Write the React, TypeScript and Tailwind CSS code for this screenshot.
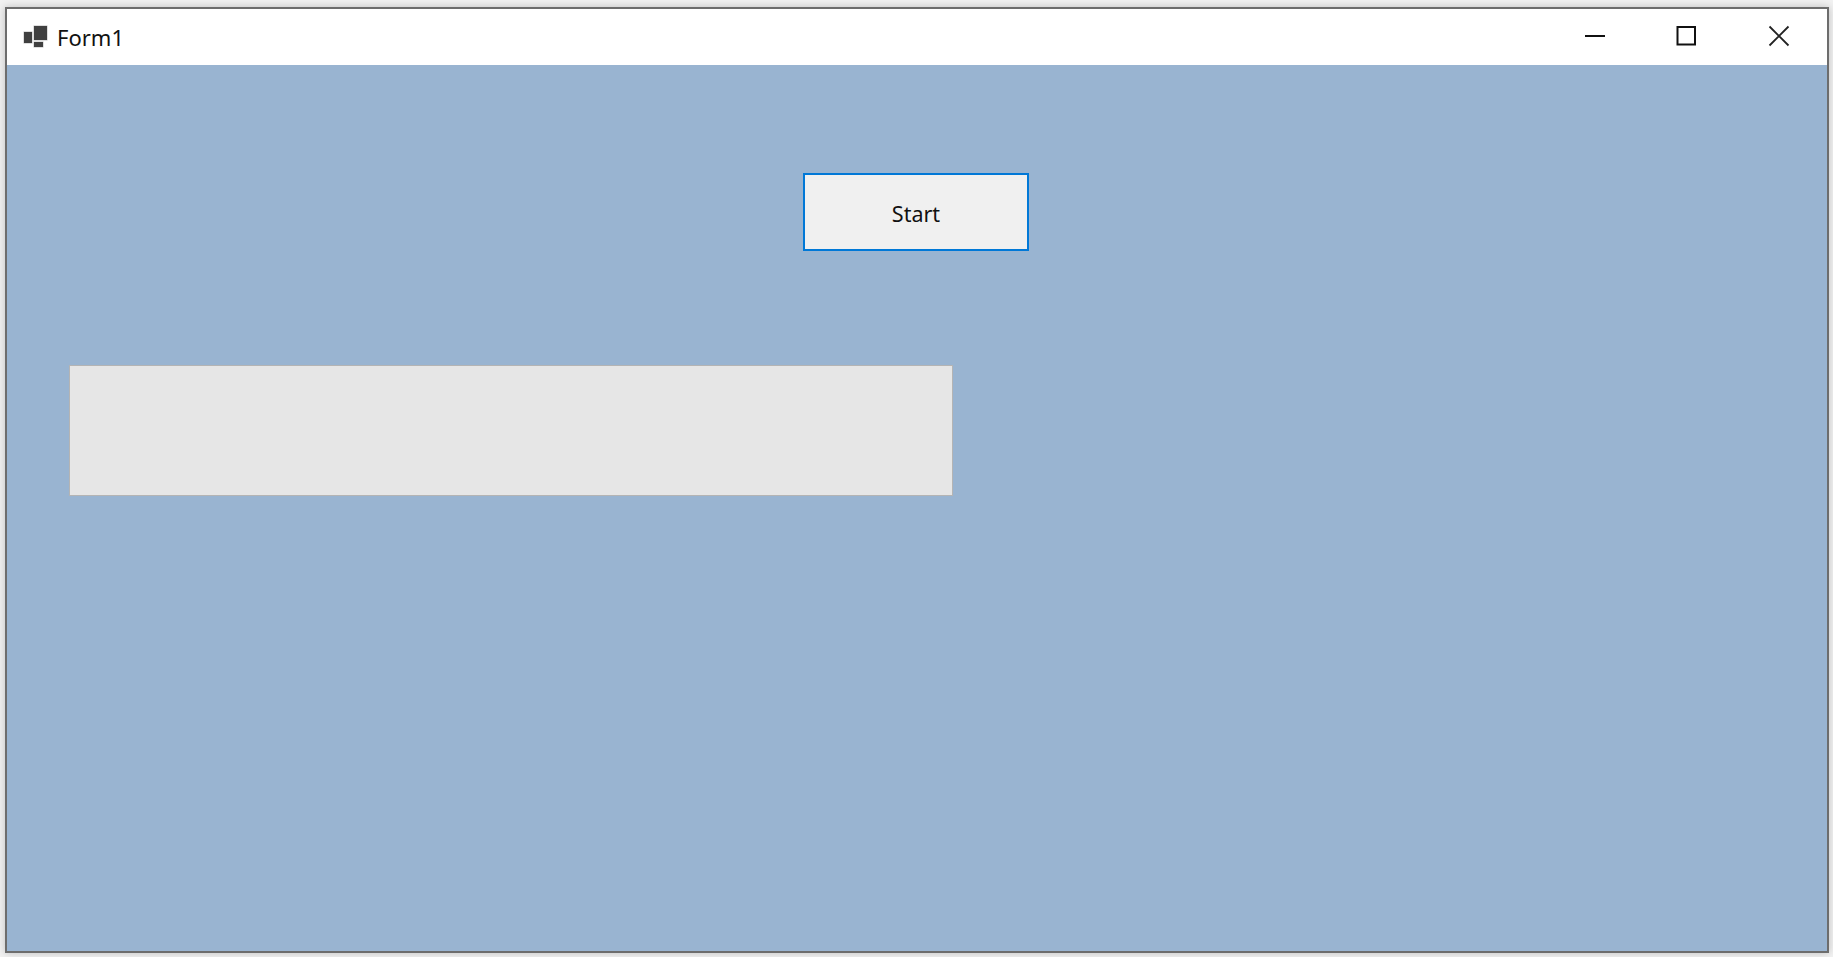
import React from 'react';

const AppIcon = () => (
  <svg width="26" height="24" viewBox="0 0 26 24" className="block">
    <g fill="#404040" stroke="#404040" strokeOpacity="0.35" strokeWidth="1">
      <rect x="1" y="7" width="8" height="11" />
      <rect x="11" y="1" width="13" height="14" />
      <rect x="11" y="17" width="9" height="5" />
    </g>
  </svg>
);

const Minimize = () => (
  <svg width="22" height="22" viewBox="0 0 22 22" className="block">
    <path d="M1 11h20" stroke="#111" strokeWidth="2" fill="none" />
  </svg>
);

const Maximize = () => (
  <svg width="22" height="22" viewBox="0 0 22 22" className="block">
    <rect x="1.5" y="2" width="17.5" height="17.5" stroke="#111" strokeWidth="2" fill="none" />
  </svg>
);

const Close = () => (
  <svg width="22" height="22" viewBox="0 0 22 22" className="block">
    <path d="M1.5 1.5l19 19M20.5 1.5l-19 19" stroke="#222" strokeWidth="1.8" fill="none" />
  </svg>
);

export default function App() {
  return (
    <div className="h-[957px] w-[1833px] overflow-hidden bg-[#f2f2f2] pt-[7px] pr-[4px] pb-[4px] pl-[5px] font-['Noto_Sans',sans-serif]">
      <div className="flex h-full flex-col border-2 border-[#6d6d6d] shadow-[0_0_8px_rgba(0,0,0,0.22)]">
        {/* title bar */}
        <div className="flex h-[56px] shrink-0 items-center bg-white pl-[16px]">
          <AppIcon />
          <span className="ml-[8px] text-[22px] leading-none text-[#111]">Form1</span>
          <div className="ml-auto flex items-center gap-[70px] pr-[37px] pb-[2px]">
            <Minimize />
            <div className="flex gap-[70px]">
              <Maximize />
              <Close />
            </div>
          </div>
        </div>
        {/* form body */}
        <div className="flex flex-1 flex-col bg-[#99b4d1] pt-[108px] pl-[62px]">
          <button className="ml-[734px] flex h-[78px] w-[226px] items-center justify-center border-2 border-[#0078d7] bg-[#f0f0f0] pt-[5px] text-[21.5px] text-[#111]">
            Start
          </button>
          <div className="mt-[114px] h-[131px] w-[884px] border border-[#b4b4b4] bg-[#e6e6e6]" />
        </div>
      </div>
    </div>
  );
}
